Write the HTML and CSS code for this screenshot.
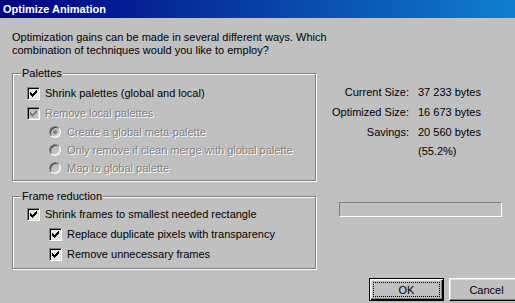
FILE: index.html
```html
<!DOCTYPE html>
<html>
<head>
<meta charset="utf-8">
<link rel="stylesheet" href="styles.css">
</head>
<body>
<div class="window">
  <div class="titlebar">Optimize Animation</div>
  <div class="content">
    <p class="intro">Optimization gains can be made in several different ways. Which<br>combination of techniques would you like to employ?</p>
    <div class="main">
      <div class="left">
        <div class="group palettes">
          <span class="legend">Palettes</span>
          <div class="row row-cb">
            <span class="cb"><svg width="7" height="7" viewBox="0 0 7 7"><g class="mark"><rect x="0" y="2" width="1" height="3"/><rect x="1" y="3" width="1" height="3"/><rect x="2" y="4" width="1" height="3"/><rect x="3" y="3" width="1" height="3"/><rect x="4" y="2" width="1" height="3"/><rect x="5" y="1" width="1" height="3"/><rect x="6" y="0" width="1" height="3"/></g></svg></span>
            <span class="lbl">Shrink palettes (global and local)</span>
          </div>
          <div class="row row-cb disabled">
            <span class="cb"><svg width="7" height="7" viewBox="0 0 7 7"><g class="mark"><rect x="0" y="2" width="1" height="3"/><rect x="1" y="3" width="1" height="3"/><rect x="2" y="4" width="1" height="3"/><rect x="3" y="3" width="1" height="3"/><rect x="4" y="2" width="1" height="3"/><rect x="5" y="1" width="1" height="3"/><rect x="6" y="0" width="1" height="3"/></g></svg></span>
            <span class="lbl">Remove local palettes</span>
          </div>
          <div class="row row-rb sub disabled">
            <span class="rb checked"></span>
            <span class="lbl">Create a global meta-palette</span>
          </div>
          <div class="row row-rb sub disabled">
            <span class="rb"></span>
            <span class="lbl">Only remove if clean merge with global palette</span>
          </div>
          <div class="row row-rb sub disabled">
            <span class="rb"></span>
            <span class="lbl">Map to global palette</span>
          </div>
        </div>
        <div class="group frames">
          <span class="legend">Frame reduction</span>
          <div class="row row-cb">
            <span class="cb"><svg width="7" height="7" viewBox="0 0 7 7"><g class="mark"><rect x="0" y="2" width="1" height="3"/><rect x="1" y="3" width="1" height="3"/><rect x="2" y="4" width="1" height="3"/><rect x="3" y="3" width="1" height="3"/><rect x="4" y="2" width="1" height="3"/><rect x="5" y="1" width="1" height="3"/><rect x="6" y="0" width="1" height="3"/></g></svg></span>
            <span class="lbl">Shrink frames to smallest needed rectangle</span>
          </div>
          <div class="row row-cb sub">
            <span class="cb"><svg width="7" height="7" viewBox="0 0 7 7"><g class="mark"><rect x="0" y="2" width="1" height="3"/><rect x="1" y="3" width="1" height="3"/><rect x="2" y="4" width="1" height="3"/><rect x="3" y="3" width="1" height="3"/><rect x="4" y="2" width="1" height="3"/><rect x="5" y="1" width="1" height="3"/><rect x="6" y="0" width="1" height="3"/></g></svg></span>
            <span class="lbl">Replace duplicate pixels with transparency</span>
          </div>
          <div class="row row-cb sub">
            <span class="cb"><svg width="7" height="7" viewBox="0 0 7 7"><g class="mark"><rect x="0" y="2" width="1" height="3"/><rect x="1" y="3" width="1" height="3"/><rect x="2" y="4" width="1" height="3"/><rect x="3" y="3" width="1" height="3"/><rect x="4" y="2" width="1" height="3"/><rect x="5" y="1" width="1" height="3"/><rect x="6" y="0" width="1" height="3"/></g></svg></span>
            <span class="lbl">Remove unnecessary frames</span>
          </div>
        </div>
      </div>
      <div class="right">
        <div class="stats">
          <span class="k">Current Size:</span><span class="v">37 233 bytes</span>
          <span class="k">Optimized Size:</span><span class="v">16 673 bytes</span>
          <span class="k">Savings:</span><span class="v">20 560 bytes</span>
          <span class="k"></span><span class="v">(55.2%)</span>
        </div>
        <div class="progress"></div>
      </div>
    </div>
    <div class="footer">
      <button class="btn default"><span class="focus">OK</span></button>
      <button class="btn">Cancel</button>
    </div>
  </div>
</div>
</body>
</html>
```
FILE: styles.css
```css
html, body {
  margin: 0;
  padding: 0;
  background: #c0c0c0;
  overflow: hidden;
}
body {
  width: 515px;
  height: 303px;
  font-family: "Liberation Sans", Arial, sans-serif;
  font-size: 11px;
  color: #000;
}
.window {
  width: 536px;
  height: 303px;
  background: #c0c0c0;
}
.titlebar {
  height: 18px;
  line-height: 18px;
  padding-left: 3px;
  background: linear-gradient(to right, #000080, #1084d0);
  color: #fff;
  font-weight: bold;
  font-size: 11px;
  white-space: nowrap;
}
.content {
  padding: 13px 12px 0 12px;
}
.intro {
  margin: 0;
  line-height: 13px;
  white-space: nowrap;
}
.main {
  display: flex;
  margin-top: 16px;
}
.left {
  width: 304px;
  display: flex;
  flex-direction: column;
}
.group {
  position: relative;
  border: 1px solid #808080;
  box-shadow: inset 1px 1px 0 #fff, 1px 1px 0 #fff;
  padding-left: 14px;
}
.palettes {
  padding-top: 9px;
  padding-bottom: 3px;
}
.frames {
  margin-top: 15px;
  padding-top: 7px;
  padding-bottom: 4px;
}
.legend {
  position: absolute;
  top: -7px;
  left: 8px;
  padding: 0 1px;
  line-height: 13px;
  background: #c0c0c0;
  white-space: nowrap;
}
.row {
  display: flex;
  align-items: center;
  white-space: nowrap;
}
.row-cb {
  height: 20px;
  gap: 5px;
}
.row-rb {
  height: 18px;
  gap: 6px;
}
.sub {
  margin-left: 22px;
}
.cb {
  box-sizing: border-box;
  width: 13px;
  height: 13px;
  border: 1px solid;
  border-color: #808080 #fff #fff #808080;
  box-shadow: inset 1px 1px 0 #000, inset -1px -1px 0 #dfdfdf;
  background: #e2ece2;
  display: flex;
  align-items: center;
  justify-content: center;
  flex: none;
}
.cb svg {
  display: block;
}
.mark {
  fill: #000;
}
.disabled .cb {
  background: #c0c0c0;
}
.disabled .mark {
  fill: #808080;
}
.rb {
  box-sizing: border-box;
  width: 12px;
  height: 12px;
  border-radius: 50%;
  border: 1px solid;
  border-color: #808080 #fff #fff #808080;
  box-shadow: inset 1px 1px 0 #404040, inset -1px -1px 0 #dfdfdf;
  background: #c0c0c0;
  display: flex;
  align-items: center;
  justify-content: center;
  flex: none;
}
.rb.checked::after {
  content: "";
  width: 4px;
  height: 4px;
  border-radius: 50%;
  background: #808080;
}
.disabled .lbl {
  color: #808080;
  text-shadow: 1px 1px 0 #fff;
}
.lbl {
  line-height: 13px;
}
.right {
  flex: 1;
  padding-top: 9px;
}
.stats {
  display: grid;
  grid-template-columns: 93px auto;
  grid-template-rows: 20px 20px 20px 18px;
  column-gap: 9px;
  align-items: center;
  line-height: 13px;
  white-space: nowrap;
}
.k {
  text-align: right;
}
.progress {
  box-sizing: border-box;
  margin-top: 42px;
  margin-left: 23px;
  width: 163px;
  height: 15px;
  border: 1px solid;
  border-color: #808080 #fff #fff #808080;
}
.footer {
  display: flex;
  justify-content: flex-end;
  gap: 5px;
  margin-top: 9px;
}
.btn {
  box-sizing: border-box;
  width: 75px;
  height: 23px;
  margin: 0;
  padding: 0;
  background: #c0c0c0;
  border: 1px solid;
  border-color: #fff #000 #000 #fff;
  box-shadow: inset -1px -1px 0 #808080, inset 1px 1px 0 #dfdfdf;
  font-family: "Liberation Sans", Arial, sans-serif;
  font-size: 11px;
  color: #000;
  display: flex;
  align-items: center;
  justify-content: center;
}
.btn.default {
  border: 1px solid #000;
  box-shadow: inset 1px 1px 0 #fff, inset -1px -1px 0 #000, inset -2px -2px 0 #808080, inset 2px 2px 0 #dfdfdf;
  padding: 3px;
}
.focus {
  box-sizing: border-box;
  width: 100%;
  height: 100%;
  border: 1px dotted #000;
  display: flex;
  align-items: center;
  justify-content: center;
}
```
